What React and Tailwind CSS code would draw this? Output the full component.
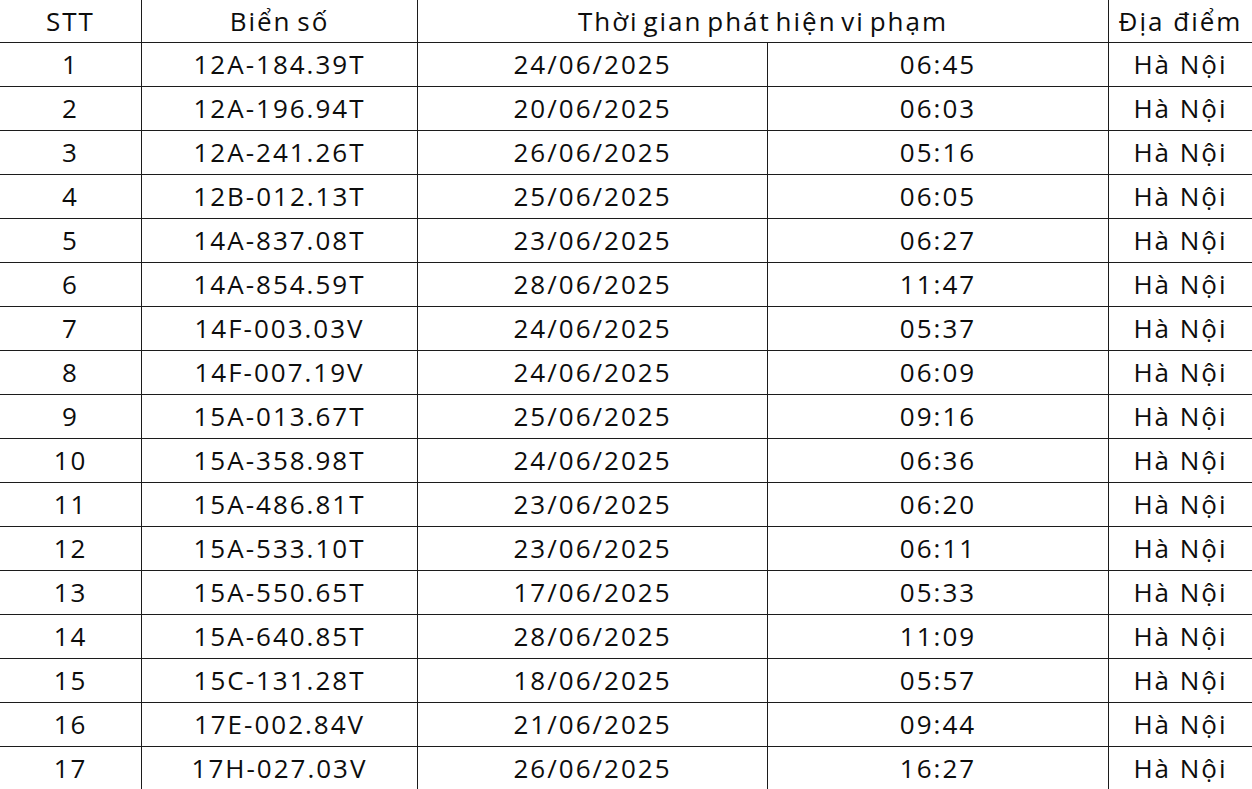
import React from "react";

const rows = [
  ["1", "12A-184.39T", "24/06/2025", "06:45"],
  ["2", "12A-196.94T", "20/06/2025", "06:03"],
  ["3", "12A-241.26T", "26/06/2025", "05:16"],
  ["4", "12B-012.13T", "25/06/2025", "06:05"],
  ["5", "14A-837.08T", "23/06/2025", "06:27"],
  ["6", "14A-854.59T", "28/06/2025", "11:47"],
  ["7", "14F-003.03V", "24/06/2025", "05:37"],
  ["8", "14F-007.19V", "24/06/2025", "06:09"],
  ["9", "15A-013.67T", "25/06/2025", "09:16"],
  ["10", "15A-358.98T", "24/06/2025", "06:36"],
  ["11", "15A-486.81T", "23/06/2025", "06:20"],
  ["12", "15A-533.10T", "23/06/2025", "06:11"],
  ["13", "15A-550.65T", "17/06/2025", "05:33"],
  ["14", "15A-640.85T", "28/06/2025", "11:09"],
  ["15", "15C-131.28T", "18/06/2025", "05:57"],
  ["16", "17E-002.84V", "21/06/2025", "09:44"],
  ["17", "17H-027.03V", "26/06/2025", "16:27"],
];

const cell = "flex items-center justify-center border-r border-[#1c1c1c]";

function App() {
  return (
    <div
      className="w-[1252px] h-[789px] overflow-hidden bg-white text-[#0d0d0d] text-[26px] tracking-[2px]"
      style={{ fontFamily: '"Open Sans", "Noto Sans", sans-serif' }}
    >
      <div className="grid grid-cols-[142px_276px_350px_341px_1fr] h-[43px] border-b border-[#1c1c1c]">
        <div className={cell}>STT</div>
        <div className={cell + " [word-spacing:-3px]"}>Biển số</div>
        <div className={cell + " col-span-2 [word-spacing:-4px]"}>
          Thời gian phát hiện vi phạm
        </div>
        <div className="flex items-center justify-center">Địa điểm</div>
      </div>
      {rows.map((r) => (
        <div
          key={r[0]}
          className="grid grid-cols-[142px_276px_350px_341px_1fr] h-[44px] border-b border-[#1c1c1c]"
        >
          <div className={cell}>{r[0]}</div>
          <div className={cell}>{r[1]}</div>
          <div className={cell}>{r[2]}</div>
          <div className={cell}>{r[3]}</div>
          <div className="flex items-center justify-center">Hà Nội</div>
        </div>
      ))}
    </div>
  );
}

export default App;
